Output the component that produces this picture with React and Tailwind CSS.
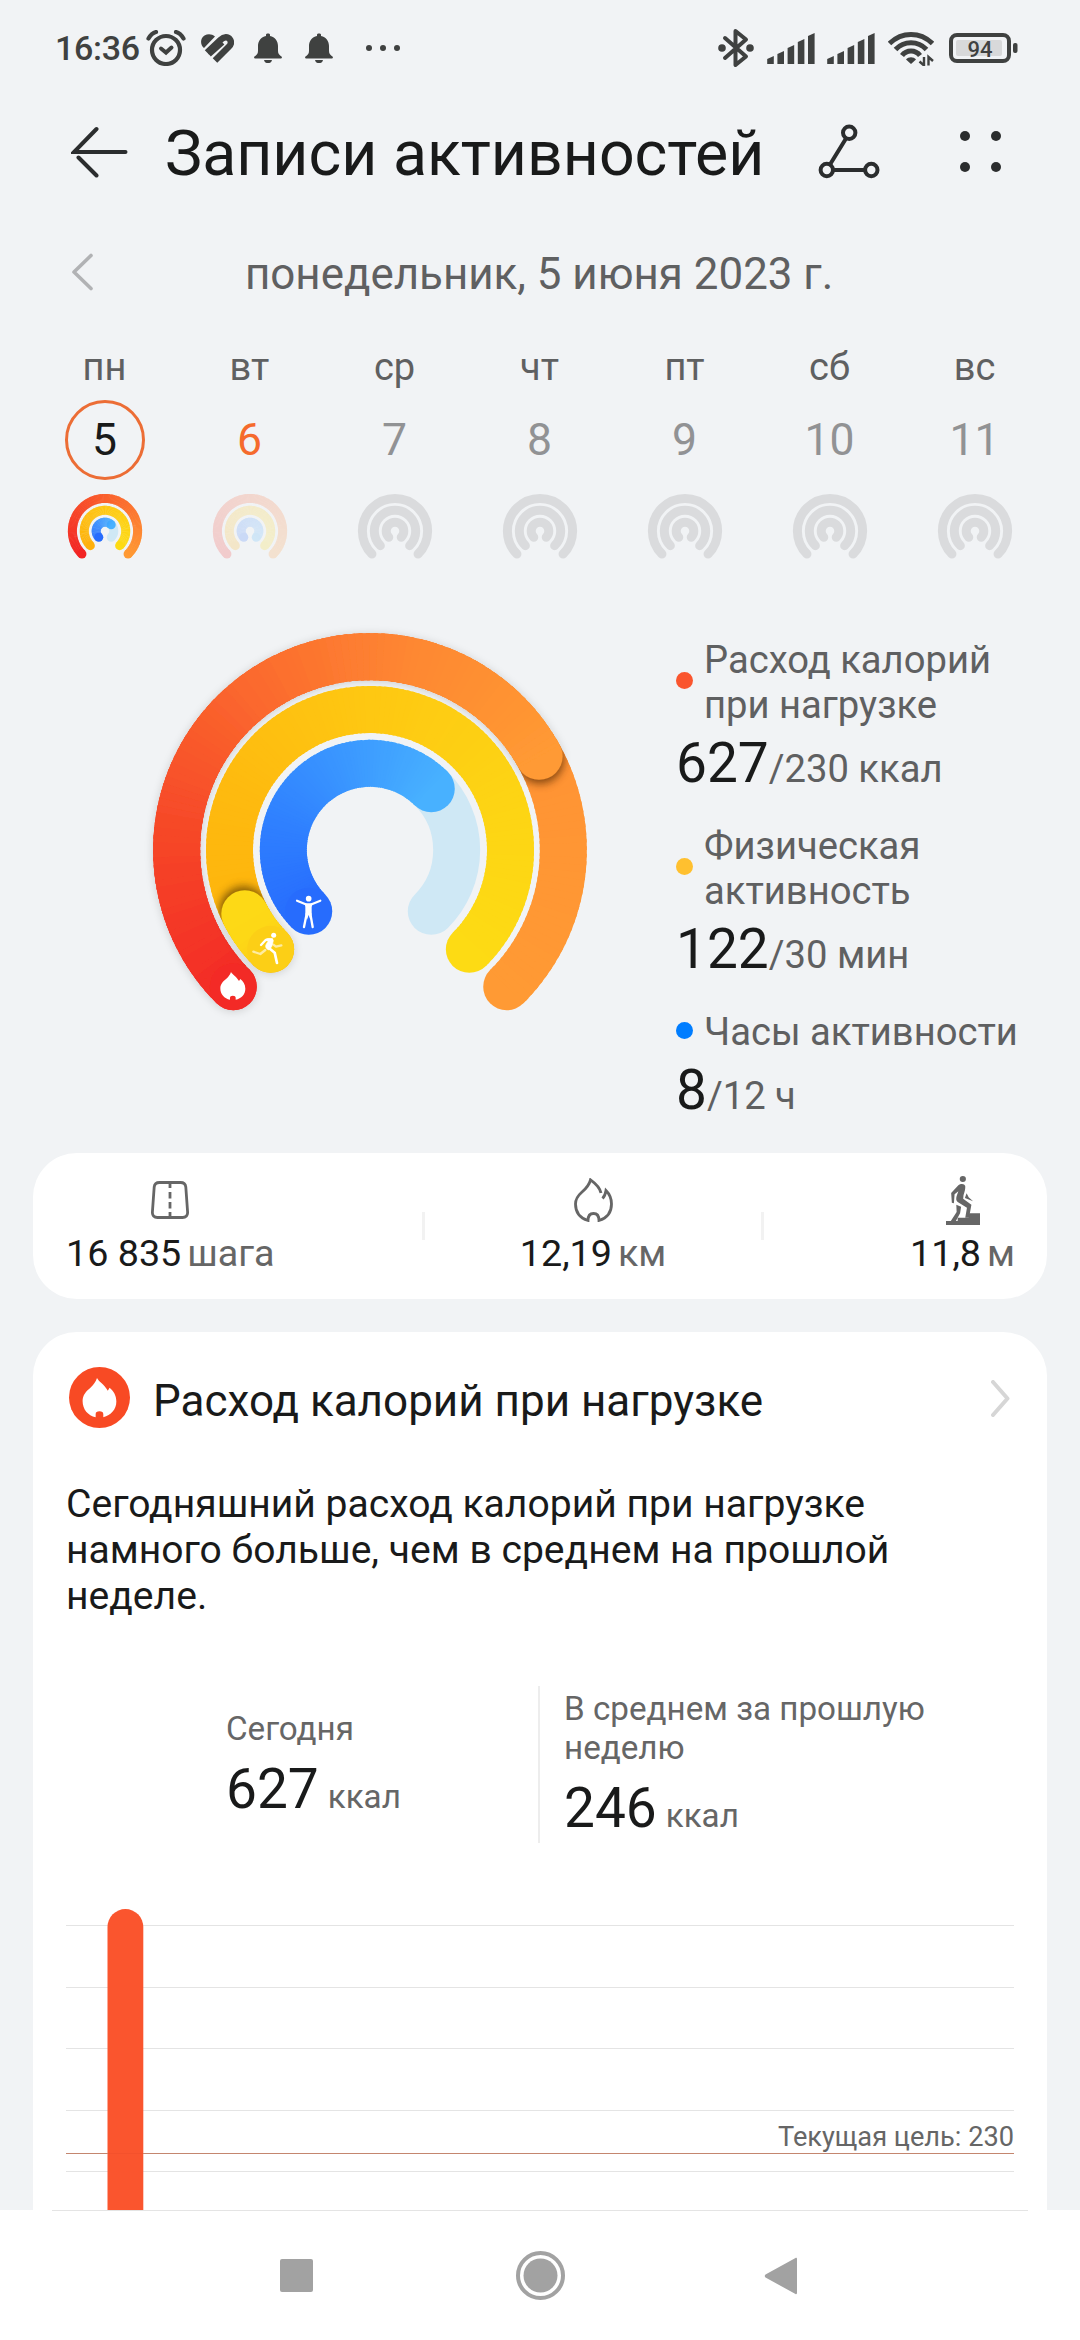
import React from "react";

const START_ANGLE = 225;
const SWEEP = 270;

const week = [
  { label: "пн", date: 5, state: "selected" },
  { label: "вт", date: 6, state: "today" },
  { label: "ср", date: 7, state: "empty" },
  { label: "чт", date: 8, state: "empty" },
  { label: "пт", date: 9, state: "empty" },
  { label: "сб", date: 10, state: "empty" },
  { label: "вс", date: 11, state: "empty" },
];

const goals = [
  {
    dot: "bg-[#fa552e]",
    lines: ["Расход калорий", "при нагрузке"],
    value: "627",
    goal: "/230 ккал",
  },
  {
    dot: "bg-[#ffc02f]",
    lines: ["Физическая", "активность"],
    value: "122",
    goal: "/30 мин",
  },
  {
    dot: "bg-[#007dff]",
    lines: ["Часы активности"],
    value: "8",
    goal: "/12 ч",
  },
];

const RED = ["#f32b25", "#f64c29", "#fc7a2f", "#ff9434", "#ff9a34"];
const YELLOW = ["#feb30c", "#feba0f", "#fec812", "#fdd414", "#fddb14"];
const BLUE = ["#276cfd", "#2f80ff", "#3b98ff", "#48b1ff"];

const point = (c, r, angle) => {
  const a = ((START_ANGLE + angle) * Math.PI) / 180;
  return [c + r * Math.sin(a), c - r * Math.cos(a)];
};

const arc = (c, r, from, to) => {
  const [x0, y0] = point(c, r, from);
  const [x1, y1] = point(c, r, to);
  return `M${x0} ${y0}A${r} ${r} 0 ${to - from > 180 ? 1 : 0} 1 ${x1} ${y1}`;
};

const mix = (stops, t) => {
  const pos = Math.min(Math.max(t, 0), 0.9999) * (stops.length - 1);
  const i = Math.floor(pos);
  const parse = (hex) => [1, 3, 5].map((n) => parseInt(hex.slice(n, n + 2), 16));
  const a = parse(stops[i]);
  const b = parse(stops[i + 1]);
  return `rgb(${a.map((v, n) => Math.round(v + (b[n] - v) * (pos - i))).join(",")})`;
};

// Conic gradient along the arc, drawn as short overlapping pieces
const GradientArc = ({ c, r, width, to = SWEEP, stops }) => {
  const step = 2;
  const pieces = [];
  for (let a = 0; a < to; a += step) pieces.push(a);
  const [sx, sy] = point(c, r, 0);
  const [ex, ey] = point(c, r, to);
  return (
    <g fill="none" strokeWidth={width}>
      <circle cx={ex} cy={ey} r={width / 2} fill={mix(stops, 1)} />
      {pieces
        .map((a) => (
          <path
            key={a}
            d={arc(c, r, a, Math.min(a + step + 1, to))}
            stroke={mix(stops, (a + step / 2) / to)}
          />
        ))
        .reverse()}
      <circle cx={sx} cy={sy} r={width / 2} fill={mix(stops, 0)} />
    </g>
  );
};

const SolidArc = ({ c, r, width, color }) => (
  <path d={arc(c, r, 0, SWEEP)} fill="none" stroke={color} strokeWidth={width} strokeLinecap="round" />
);

const MiniRings = ({ state }) => {
  if (state === "empty") {
    return (
      <svg className="w-[76px] h-[76px]" viewBox="0 0 76 76">
        {[32.6, 20.7, 8.8].map((r) => (
          <SolidArc key={r} c={38} r={r} width={9} color="#dadbdd" />
        ))}
      </svg>
    );
  }
  const selected = state === "selected";
  return (
    <svg className="w-[76px] h-[76px]" viewBox="0 0 76 76" opacity={selected ? 1 : 0.19}>
      <GradientArc c={38} r={32.6} width={9} stops={["#f22424", "#fa602d", "#ff9a34"]} />
      <GradientArc c={38} r={20.7} width={9} stops={["#feb00c", "#fec812", "#fddb14"]} />
      {selected && <SolidArc c={38} r={8.8} width={9} color="#cfe8f5" />}
      <GradientArc c={38} r={8.8} width={9} to={selected ? 180 : SWEEP} stops={BLUE} />
    </svg>
  );
};

const FLAME =
  "M32 0C36 8 48 13 56 27L60 21C68 27 75 37 75 50C75 67 63 79 46 83.5V77C46 73 43 71 37.5 71S29 73 29 77V83.5C12 80 0 67 0 49C0 36 8 28 18 20C25 14 29 8 32 0Z";

const ActivityRings = () => {
  const [tipX, tipY] = point(720, 580, 196);
  const [tip2X, tip2Y] = point(720, 421.5, 18);
  return (
    <svg className="w-[480px] h-[420px] shrink-0" viewBox="0 0 1440 1260">
      <defs>
        <filter id="soft" x="-20%" y="-20%" width="140%" height="140%">
          <feDropShadow dx="0" dy="3" stdDeviation="12" floodColor="#000" floodOpacity="0.16" />
        </filter>
        <filter id="blur" x="-50%" y="-50%" width="200%" height="200%">
          <feGaussianBlur stdDeviation="12" />
        </filter>
        <mask id="outer" maskUnits="userSpaceOnUse" x="0" y="0" width="1440" height="1260">
          <SolidArc c={720} r={580} width={141} color="#fff" />
        </mask>
        <mask id="middle" maskUnits="userSpaceOnUse" x="0" y="0" width="1440" height="1260">
          <SolidArc c={720} r={421.5} width={141} color="#fff" />
        </mask>
      </defs>

      <GradientArc c={720} r={580} width={141} stops={RED} />
      <g mask="url(#outer)">
        <circle cx={tipX + 3} cy={tipY + 12} r="71" fill="#5a2a00" opacity="0.6" filter="url(#blur)" />
      </g>
      <g filter="url(#soft)">
        <GradientArc c={720} r={580} width={141} to={196} stops={["#f32b25", "#f64728", "#fb692e", "#fe8831", "#ff9a34"]} />
      </g>

      <GradientArc c={720} r={421.5} width={141} stops={YELLOW} />
      <g mask="url(#middle)">
        <circle cx={tip2X - 4} cy={tip2Y - 12} r="71" fill="#5a3a00" opacity="0.65" filter="url(#blur)" />
      </g>
      <g filter="url(#soft)">
        <GradientArc c={720} r={421.5} width={141} to={18} stops={["#fccf16", "#fdd815", "#fdd916"]} />
      </g>

      <SolidArc c={720} r={260} width={141} color="#cfe8f5" />
      <GradientArc c={720} r={260} width={141} to={180} stops={BLUE} />

      <path d={FLAME} transform="translate(271 1086)" fill="#fff" />

      <g transform="translate(366 968)" fill="none" stroke="#fff" strokeLinecap="round" strokeLinejoin="round">
        <path d="M40 52L25 64L4 57M64 36L72 42L88 38" strokeWidth="7" opacity="0.6" />
        <circle cx="65" cy="8" r="7.5" fill="#fff" stroke="none" />
        <path d="M60 20L41 22L27 37" strokeWidth="7" />
        <path d="M45 18C53 16 64 18 64 24L59 42L50 52C42 48 39 42 42 36L49 24Z" fill="#fff" strokeWidth="2" />
        <path d="M48 44L68 60L75 91" strokeWidth="8" />
      </g>

      <g transform="translate(498 857)" fill="none" stroke="#fff" strokeLinecap="round">
        <circle cx="38" cy="9" r="8.5" fill="#fff" stroke="none" />
        <path d="M3 15L29 26M73 15L47 26" strokeWidth="6.5" />
        <path d="M26 23H50L47 34V56L43 72L38 58L33 72L28 56V34Z" fill="#fff" stroke="none" />
        <path d="M32 54L24 94M43 54L50 94" strokeWidth="7" />
      </g>
    </svg>
  );
};

const AlarmIcon = () => (
  <svg className="w-10 h-9 ml-[6px]" viewBox="0 0 40 36" fill="none" stroke="#3f4140" strokeLinecap="round">
    <circle cx="20" cy="20" r="14" strokeWidth="4.2" />
    <path d="M2.500 8.500C4.500 5 7.500 2.600 10 2M37.500 8.500C35.500 5 32.500 2.600 30 2" strokeWidth="4.200" />
    <path d="M15 18.500L20 22.500L25.500 17.500" strokeWidth="4" />
  </svg>
);

const HeartIcon = () => (
  <svg className="w-[33px] h-[29px] ml-[15px]" viewBox="0 0 33 29" fill="none" stroke="#3f4140">
    <path d="M3 14C-1 11 -1 4 3.500 1.500C7 -.5 11 0 14 2.500Z" fill="#3f4140" stroke="none" />
    <path d="M6 18.500L19.500 5.800C23 2.500 27 2.500 29 5.500C30.500 8 30 10.500 28 12.500L14 26.500" strokeWidth="6.400" />
    <path d="M8.500 21L22 9" strokeWidth="4" />
  </svg>
);

const BellIcon = () => (
  <svg className="w-7 h-[30px]" viewBox="0 0 28 30" fill="#3f4140">
    <path d="M12 1.500C12 0 16 0 16 1.500V3C21 4 24 8 24 13V18C24 21 25.500 22 27.500 23.500C28.500 25 27.500 25.500 26.500 25.500H1.500C.5 25.500 -.5 25 .5 23.500C2.500 22 4 21 4 18V13C4 8 7 4 12 3Z" />
    <path d="M10 27H18C17.500 29.500 16 30 14 30S10.500 29.500 10 27Z" />
  </svg>
);

const SignalIcon = () => (
  <svg className="w-12 h-[31px]" viewBox="0 0 48 31" fill="#3f4140">
    {[8, 13, 19, 25, 31].map((h, i) => (
      <path
        key={h}
        d={`M${i * 10.2 + 0.2} ${31 - h + 3}L${i * 10.2 + 6.8} ${31 - h}V31H${i * 10.2 + 0.2}Z`}
      />
    ))}
  </svg>
);

const StatusBar = () => (
  <div className="h-[96px] flex items-center pl-[55px] pr-[62px] text-[#3f4140]">
    <span className="text-[34px] font-medium tracking-[-0.3px] w-[85px]">16:36</span>
    <AlarmIcon />
    <HeartIcon />
    <div className="ml-[20px] flex gap-[23px]">
      <BellIcon />
      <BellIcon />
    </div>
    <div className="ml-[33px] flex gap-2">
      <span className="size-[6px] rounded-full bg-[#3f4140]" />
      <span className="size-[6px] rounded-full bg-[#3f4140]" />
      <span className="size-[6px] rounded-full bg-[#3f4140]" />
    </div>

    <div className="ml-auto flex items-center">
      <svg className="w-9 h-10 mr-[13px]" viewBox="0 0 36 40" fill="none" stroke="#3f4140" strokeWidth="4">
        <path d="M7 10L28 28.500L17.500 37V3L28 11.500L7 30" strokeLinejoin="round" strokeLinecap="round" />
        <circle cx="4" cy="20" r="3.800" fill="#3f4140" stroke="none" />
        <circle cx="32" cy="20" r="3.800" fill="#3f4140" stroke="none" />
      </svg>
      <SignalIcon />
      <span className="w-3" />
      <SignalIcon />
      <svg className="w-[46px] h-[35px] ml-[13px] mr-[15px]" viewBox="0 0 46 35" fill="none" stroke="#3f4140" strokeWidth="5">
        <path d="M1.500 12.500C14 .5 32 .5 44.500 12.500" />
        <path d="M7.500 18.500C16 9.500 30 9.500 38.500 18.500" />
        <path d="M14 24.500C18.500 18.500 27.500 18.500 32 24.500" />
        <path d="M18 28.500C20.500 25.500 25.500 25.500 28 28.500L23 33Z" fill="#3f4140" stroke="none" />
        <path d="M36 26V34.500L31.500 30.500M40.500 34.500V26L45 30" strokeWidth="2.400" />
      </svg>
      <svg className="w-[69px] h-[30px]" viewBox="0 0 69 30">
        <rect x="2" y="2" width="58" height="26" rx="6" fill="none" stroke="#3f4140" strokeWidth="4" />
        <rect x="7" y="7" width="46" height="16" rx="2" fill="#d8d9da" />
        <rect x="64" y="10" width="4.500" height="10" rx="2" fill="#3f4140" />
        <text x="31" y="23.800" textAnchor="middle" className="text-[22px] font-medium" fill="#3f4140">
          94
        </text>
      </svg>
    </div>
  </div>
);

const Header = () => (
  <div className="h-[116px] flex items-center pl-[71px]">
    <svg className="w-[57px] h-[52px] mb-1" viewBox="0 0 57 52" fill="none" stroke="#2b2d2e" strokeWidth="4" strokeLinecap="round">
      <path d="M25.500 3L3 26H54.500M7.500 31.500L25.500 49.500" />
    </svg>
    <h1 className="ml-[37px] w-[634px] text-[62.6px] leading-none text-[#191a1a] whitespace-nowrap">
      Записи активностей
    </h1>
    <svg className="ml-[19px] mb-1 w-[62px] h-[56px]" viewBox="0 0 62 56" fill="none" stroke="#2b2d2e" strokeWidth="4">
      <circle cx="31.200" cy="8.700" r="6.200" />
      <circle cx="8.800" cy="46" r="6.200" />
      <circle cx="53.300" cy="46" r="6.200" />
      <path d="M28 14.500L12 40.500M15 46H47" />
    </svg>
    <div className="ml-[80px] mb-[6px] grid grid-cols-2 gap-[21px]">
      <span className="size-[10px] rounded-full bg-[#2b2d2e]" />
      <span className="size-[10px] rounded-full bg-[#2b2d2e]" />
      <span className="size-[10px] rounded-full bg-[#2b2d2e]" />
      <span className="size-[10px] rounded-full bg-[#2b2d2e]" />
    </div>
  </div>
);

const dateColor = {
  selected: "text-[#191a1a] border-[3px] border-[#ec6d35]",
  today: "text-[#f56a2c]",
  empty: "text-[#919294]",
};

const Week = () => (
  <div className="flex pl-[32px]">
    {week.map((day) => (
      <div key={day.date} className="w-[145px] flex flex-col items-center">
        <span className="h-[64px] pb-px text-[38px] leading-[63px] text-[#5f6061]">{day.label}</span>
        <span
          className={`size-[80px] rounded-full flex items-center justify-center text-[44.5px] leading-none ${dateColor[day.state]}`}
        >
          {day.date}
        </span>
        <div className="mt-[13px]">
          <MiniRings state={day.state} />
        </div>
      </div>
    ))}
  </div>
);

const Goals = () => (
  <div className="pt-[28px] pl-[66px] flex flex-col gap-[29px]">
    {goals.map((item) => (
      <div key={item.value}>
        <div className="flex items-center">
          <span className={`size-[17px] mb-[5px] rounded-full ${item.dot}`} />
          <p className="ml-[11px] text-[38.2px] leading-[44.8px] text-[#5f6061] whitespace-nowrap">
            {item.lines.map((line) => (
              <span key={line} className="block">
                {line}
              </span>
            ))}
          </p>
        </div>
        <p className="mt-[3px] text-[55px] leading-[64.5px] text-[#191a1a] whitespace-nowrap">
          {item.value}
          <span className="text-[38.2px] leading-none text-[#5f6061]">{item.goal}</span>
        </p>
      </div>
    ))}
  </div>
);

const Stat = ({ icon, value, unit }) => (
  <div className="flex flex-col items-center">
    <div className="h-12 flex items-center justify-center">{icon}</div>
    <p className="mt-[7px] text-[37.7px] leading-[44px] text-[#191a1a] whitespace-nowrap">
      {value}
      <span className="ml-[6px] text-[#666]">{unit}</span>
    </p>
  </div>
);

const RoadIcon = () => (
  <svg className="w-[38px] h-[38px]" viewBox="0 0 38 38" fill="none" stroke="#666" strokeWidth="2.8">
    <path d="M8.500 1.500H29.500C32.500 1.500 34.500 3.300 34.800 6L36.600 31C36.800 34.300 35 36.500 31.500 36.500H6.500C3 36.500 1.200 34.300 1.400 31L3.200 6C3.500 3.300 5.500 1.500 8.500 1.500Z" />
    <path d="M19 1.500V7M19 11V17.500M19 21V27.500M19 31V36.500" />
  </svg>
);

const FlameIcon = () => (
  <svg className="w-[39px] h-[44px]" viewBox="0 0 39 44" fill="none" stroke="#666" strokeWidth="2.8">
    <path d="M27 15C26 10 21 5 16.500 1.800C15 8 11 11.500 7.500 14.500C3.500 18 1.500 22 1.500 26C1.500 34 6 40 14 42.500C14 38 16 35.500 19.500 35.500S25 38 25 42.500C33 40 37.500 34 37.500 26C37.500 21 35.500 16 32 12.500C31.500 16 30.500 18.500 28.500 20.500" />
  </svg>
);

const StairsIcon = () => (
  <svg className="w-[34px] h-[49px]" viewBox="0 0 99 147" preserveAspectRatio="none" fill="#666">
    <circle cx="49" cy="9" r="9" />
    <path d="M36 28C42 22 54 22 56 30C57 38 54 48 51 58L50 68L74 86L67 125H56L61 95L34 78C29 74 29 68 31 60L36 46L25 55L23 82L17 80L15 51Z" />
    <path d="M60 52L66 64L79 76L55 66Z" />
    <path d="M30 86L44 92L41 112L26 140L14 135L31 108Z" />
    <path d="M0 147V135H34V125H66V112H99V147Z" />
  </svg>
);

const StatsCard = () => (
  <div className="mx-[33px] h-[146px] rounded-[44px] bg-white flex">
    <div className="w-[389px] pt-[23px] pl-[33px] flex">
      <Stat icon={<RoadIcon />} value="16 835" unit="шага" />
    </div>
    <span className="w-[3px] h-7 mt-[59px] bg-[#f2f2f2]" />
    <div className="w-[336px] pt-[23px] flex justify-center">
      <Stat icon={<FlameIcon />} value="12,19" unit="км" />
    </div>
    <span className="w-[3px] h-7 mt-[59px] bg-[#f2f2f2]" />
    <div className="flex-1 pt-[23px] pr-[32px] flex justify-end">
      <Stat icon={<StairsIcon />} value="11,8" unit="м" />
    </div>
  </div>
);

const Compare = ({ lines, value }) => (
  <div>
    <p className="text-[33.2px] leading-[39px] text-[#666] whitespace-nowrap">
      {lines.map((line) => (
        <span key={line} className="block">
          {line}
        </span>
      ))}
    </p>
    <p className="mt-[9px] text-[55px] leading-[64px] text-[#191a1a]">
      {value}
      <span className="ml-[9px] text-[33.2px] leading-none text-[#666]">ккал</span>
    </p>
  </div>
);

const CaloriesChart = () => (
  <svg className="w-[1014px] h-[367px]" viewBox="33 1843 1014 367" shapeRendering="crispEdges">
    {[1925, 1987, 2048, 2110, 2171].map((y) => (
      <rect key={y} x="66" y={y} width="948" height="1" fill="#e4e4e4" />
    ))}
    <path d="M107.500 2210V1927A17.900 17.900 0 0 1 143.300 1927V2210Z" fill="#fa552e" shapeRendering="auto" />
    <rect x="66" y="2153" width="948" height="1" fill="#c4866f" />
    <rect x="108" y="2153" width="35" height="1" fill="#f4512c" />
    <text x="1014" y="2145.500" textAnchor="end" className="text-[27.2px]" fill="#666">
      Текущая цель: 230
    </text>
  </svg>
);

const CaloriesCard = () => (
  <div className="mt-[33px] mx-[33px] h-[878px] rounded-t-[44px] bg-white overflow-hidden">
    <div className="mt-[33px] h-[66px] px-[36px] flex items-center">
      <svg className="size-[61px] mb-[2px]" viewBox="0 0 61 61">
        <circle cx="30.500" cy="30.500" r="30.500" fill="#f84a24" />
        <path d={FLAME} transform="translate(13.600 11) scale(0.450 0.470)" fill="#fff" />
      </svg>
      <h2 className="ml-[23px] pt-[5px] text-[44px] leading-none text-[#191a1a] whitespace-nowrap">
        Расход калорий при нагрузке
      </h2>
      <svg className="ml-auto w-[20px] h-[37px]" viewBox="0 0 20 37" fill="none" stroke="#d6d6d6" strokeWidth="4" strokeLinecap="round" strokeLinejoin="round">
        <path d="M2 2L16.500 18.500L2 35" />
      </svg>
    </div>

    <p className="mt-[50px] ml-[33px] text-[39.1px] leading-[46px] text-[#191a1a]">
      Сегодняшний расход калорий при нагрузке
      <br />
      намного больше, чем в среднем на прошлой
      <br />
      неделе.
    </p>

    <div className="mt-[67px] h-[157px] flex items-center">
      <div className="w-[505px] pl-[193px]">
        <Compare lines={["Сегодня"]} value="627" />
      </div>
      <span className="w-[2px] h-full bg-[#ededed]" />
      <div className="pl-[24px]">
        <Compare lines={["В среднем за прошлую", "неделю"]} value="246" />
      </div>
    </div>

    <CaloriesChart />
  </div>
);

const NavBar = () => (
  <div className="h-[130px] bg-white">
    <div className="mx-[52px] h-px bg-[#e4e4e4]" />
    <div className="h-[129px] pl-[280px] flex items-center">
      <span className="size-[33px] rounded-[2px] bg-[#a2a2a2]" />
      <svg className="ml-[202px] w-[51px] h-[51px]" viewBox="0 0 51 51">
        <circle cx="25.500" cy="25.500" r="22.500" fill="none" stroke="#a2a2a2" strokeWidth="4" />
        <circle cx="25.500" cy="25.500" r="17" fill="#a2a2a2" />
      </svg>
      <svg className="ml-[198px] w-[34px] h-[38px]" viewBox="0 0 34 38" fill="#a2a2a2">
        <path d="M31.500 1C32.300 .5 33 1 33 2V36C33 37 32.300 37.500 31.500 37L1.500 20.500C.5 19.800 .5 18.200 1.500 17.500Z" />
      </svg>
    </div>
  </div>
);

const App = () => {
  return (
    <div className="w-[1080px] h-[2340px] overflow-hidden bg-[#f1f3f5] font-['Roboto',sans-serif]">
      <StatusBar />
      <Header />
      <div className="h-[124px] flex items-center pl-[71px]">
        <svg className="w-[24px] h-[38px] mb-1" viewBox="0 0 24 38" fill="none" stroke="#b1b2b4" strokeWidth="3.6" strokeLinecap="round" strokeLinejoin="round">
          <path d="M20 2.500L3 19L20 35.500" />
        </svg>
        <span className="ml-[150px] pt-px text-[43.9px] leading-none text-[#5f6061] whitespace-nowrap">
          понедельник, 5 июня 2023 г.
        </span>
      </div>
      <Week />
      <div className="mt-[41px] h-[543px] pl-[130px] flex items-start">
        <ActivityRings />
        <Goals />
      </div>
      <StatsCard />
      <CaloriesCard />
      <NavBar />
    </div>
  );
};

export default App;
